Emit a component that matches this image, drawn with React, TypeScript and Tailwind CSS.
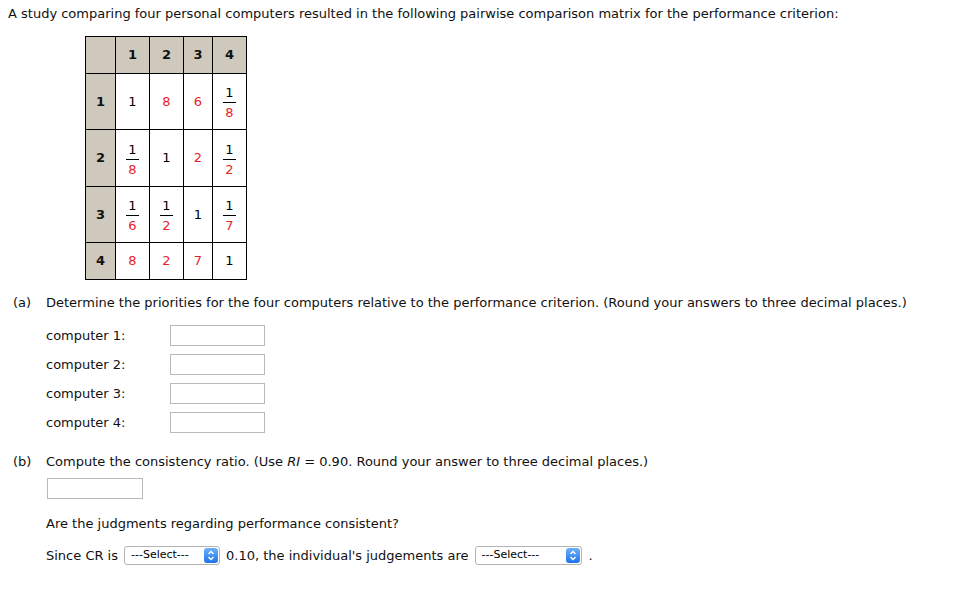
const RED = "text-[#e8232b]";

type Cell = string | [string, string];

const matrix: Cell[][] = [
  ["1", "8", "6", ["1", "8"]],
  [["1", "8"], "1", "2", ["1", "2"]],
  [["1", "6"], ["1", "2"], "1", ["1", "7"]],
  ["8", "2", "7", "1"],
];

const rowHeights = ["h-[56px]", "h-[57px]", "h-[56px]", "h-[37px]"];
const colWidths = ["w-[34px]", "w-[34px]", "w-[29px]", "w-[34px]"];

function Value({ cell }: { cell: Cell }) {
  if (Array.isArray(cell)) {
    return (
      <div className="inline-flex flex-col items-center leading-[15px]">
        <span className="text-black">{cell[0]}</span>
        <span className="block w-[13px] h-px bg-black my-[2px]" />
        <span className={RED}>{cell[1]}</span>
      </div>
    );
  }
  return <span className={cell === "1" ? "text-black" : RED}>{cell}</span>;
}

function Matrix() {
  return (
    <table className="border-collapse ml-[77px] mt-[14px] text-[13px] text-center">
      <thead>
        <tr className="h-[37px] bg-[#cfc9bd]">
          <th className="w-[30px] border border-black" />
          {["1", "2", "3", "4"].map((h, i) => (
            <th key={h} className={`${colWidths[i]} border border-black font-bold`}>
              {h}
            </th>
          ))}
        </tr>
      </thead>
      <tbody>
        {matrix.map((row, r) => (
          <tr key={r} className={rowHeights[r]}>
            <td className="border border-black bg-[#cfc9bd] font-bold">{r + 1}</td>
            {row.map((cell, c) => (
              <td key={c} className="border border-black bg-white p-0">
                <Value cell={cell} />
              </td>
            ))}
          </tr>
        ))}
      </tbody>
    </table>
  );
}

function TextBox({ className = "" }: { className?: string }) {
  return <div className={`w-[95px] h-[21px] border border-[#b9b9b9] bg-white ${className}`} />;
}

function Select({ width }: { width: string }) {
  return (
    <span
      className={`inline-flex items-center justify-between ${width} h-[19px] border border-[#b3b3b3] rounded-[3px] bg-white pl-[6px] pr-[1px] align-middle`}
    >
      <span className="text-[11px] text-black">---Select---</span>
      <span className="w-[14px] h-[15px] rounded-[3px] bg-gradient-to-b from-[#6cb0f7] to-[#1a73e8] flex items-center justify-center">
        <svg width="8" height="11" viewBox="0 0 8 11" fill="none" stroke="white" strokeWidth="1.4">
          <path d="M1.5 4 L4 1.5 L6.5 4" />
          <path d="M1.5 7 L4 9.5 L6.5 7" />
        </svg>
      </span>
    </span>
  );
}

export default function App() {
  return (
    <div
      className="w-[972px] h-[592px] bg-white text-[13px] text-[#111] pl-[8px] pt-[6px]"
      style={{ fontFamily: "Verdana, 'DejaVu Sans', sans-serif" }}
    >
      <p className="leading-[16px]">
        A study comparing four personal computers resulted in the following pairwise comparison matrix for the
        performance criterion:
      </p>

      <Matrix />

      <div className="mt-[13px] flex">
        <span className="w-[38px] pl-[5px]">(a)</span>
        <span>
          Determine the priorities for the four computers relative to the performance criterion. (Round your answers
          to three decimal places.)
        </span>
      </div>

      <div className="ml-[38px] mt-[12px] flex flex-col gap-[8px]">
        {[1, 2, 3, 4].map((n) => (
          <div key={n} className="flex items-center">
            <span className="w-[124px] relative top-[1px]">computer {n}:</span>
            <TextBox />
          </div>
        ))}
      </div>

      <div className="mt-[19px] flex">
        <span className="w-[38px] pl-[5px]">(b)</span>
        <span>
          Compute the consistency ratio. (Use <i>RI</i> = 0.90. Round your answer to three decimal places.)
        </span>
      </div>

      <TextBox className="ml-[39px] mt-[7px] w-[96px]" />

      <p className="ml-[38px] mt-[15px]">Are the judgments regarding performance consistent?</p>

      <div className="ml-[38px] mt-[12px] flex items-center gap-[6px]">
        <span>Since CR is</span>
        <Select width="w-[96px]" />
        <span>0.10, the individual's judgements are</span>
        <Select width="w-[107px]" />
        <span className="ml-[1px]">.</span>
      </div>
    </div>
  );
}
